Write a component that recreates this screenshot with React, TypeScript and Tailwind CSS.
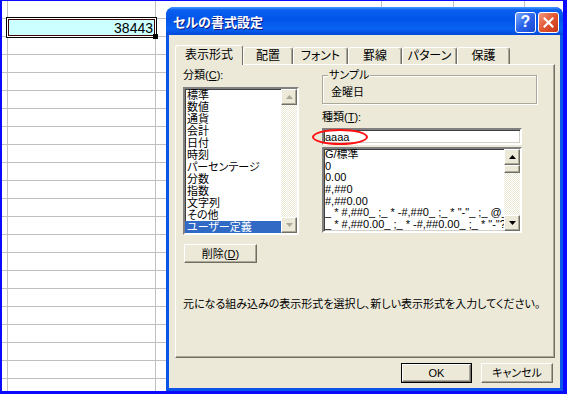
const ui = "font-['Liberation_Sans','Noto_Sans_CJK_JP',sans-serif] [font-feature-settings:'palt']";

const sheetCols = ["w-[6px]", "w-[148px]", "w-[226px]", "w-[72px]", "w-[71px]", "w-[200px]"];

const raised =
  "border border-t-white border-l-white border-r-[#716f64] border-b-[#716f64] shadow-[inset_-1px_-1px_0_#aca899]";
const sunken =
  "border-2 border-t-[#808080] border-l-[#808080] border-r-white border-b-white shadow-[inset_1px_1px_0_#404040,inset_-1px_-1px_0_#d4d0c8]";
const track = "bg-[repeating-conic-gradient(#ece9d8_0%_25%,#ffffff_0%_50%)] [background-size:2px_2px]";

function ActiveCell() {
  return (
    <div className="absolute -left-[2px] -top-[2px] z-10 h-[21px] w-[151px] border border-black bg-white p-px">
      <div className="flex h-full items-center justify-end border border-[#400000] bg-[#ccffff] pr-px font-['Liberation_Sans',sans-serif] text-[14px] leading-none text-black">
        38443
      </div>
      <div className="absolute left-[146px] top-[16px] size-[5px] bg-black" />
    </div>
  );
}

function Sheet() {
  return (
    <div className="flex flex-col">
      {Array.from({ length: 22 }).map((_, r) => (
        <div key={r} className="flex h-[18px] shrink-0">
          {sheetCols.map((w, c) => (
            <div key={c} className={`relative h-full shrink-0 border-r border-b border-[#c0c0c0] ${w}`}>
              {r === 1 && c === 1 && <ActiveCell />}
            </div>
          ))}
        </div>
      ))}
    </div>
  );
}

function Arrow({ up, dim }: { up?: boolean; dim?: boolean }) {
  return (
    <svg width="7" height="4" viewBox="0 0 7 4">
      <polygon points={up ? "0,4 3.5,0 7,4" : "0,0 3.5,4 7,0"} fill={dim ? "#aca899" : "#000"} />
    </svg>
  );
}

function ScrollButton({ up, dim }: { up?: boolean; dim?: boolean }) {
  return (
    <div className={`flex h-[16px] shrink-0 items-center justify-center bg-[#ece9d8] ${raised}`}>
      <Arrow up={up} dim={dim} />
    </div>
  );
}

function ScrollBar({ dim, thumb }: { dim?: boolean; thumb?: boolean }) {
  return (
    <div className="flex h-full w-[16px] shrink-0 flex-col">
      <ScrollButton up dim={dim} />
      {thumb && <div className={`h-[8px] shrink-0 bg-[#ece9d8] ${raised}`} />}
      <div className={`flex-1 ${track}`} />
      <ScrollButton dim={dim} />
    </div>
  );
}

const categories = ["標準", "数値", "通貨", "会計", "日付", "時刻", "パーセンテージ", "分数", "指数", "文字列", "その他", "ユーザー定義"];

const formats = [
  "G/標準",
  "0",
  "0.00",
  "#,##0",
  "#,##0.00",
  '_ * #,##0_ ;_ * -#,##0_ ;_ * "-"_ ;_ @_ ',
  '_ * #,##0.00_ ;_ * -#,##0.00_ ;_ * "-"??_ ;_ @_ ',
  '_ ¥* #,##0_ ;_ ¥* -#,##0_ ;_ ¥* "-"_ ;_ @_ ',
];

const tabs = [
  { label: "配置", w: "w-[50px]" },
  { label: "フォント", w: "w-[55px]" },
  { label: "罫線", w: "w-[54px]" },
  { label: "パターン", w: "w-[55px]" },
  { label: "保護", w: "w-[53px]" },
];

function Dialog() {
  return (
    <div className={`absolute left-[164px] top-[6px] flex h-[384px] w-[397px] flex-col rounded-t-[8px] bg-[#0b56e8] px-[3px] pb-[3px] ${ui}`}>
      <div className="-mx-[3px] flex h-[28px] shrink-0 items-center rounded-t-[8px] bg-[linear-gradient(180deg,#4a9bff_0px,#0a5ff0_3px,#0055e8_12px,#0a62f2_22px,#0048d8_28px)] pl-[7px] pr-[4px] pt-[2px]">
        <span className="flex-1 text-[13px] font-bold leading-none text-white [text-shadow:1px_1px_0_#0a1883]">
          セルの書式設定
        </span>
        <div className="mr-[2px] flex size-[21px] items-center justify-center rounded-[3px] border border-white bg-[linear-gradient(135deg,#7aa8fb,#2a64ea_50%,#1a48d2)] font-['Liberation_Sans',sans-serif] text-[16px] font-bold leading-none text-white">
          ?
        </div>
        <div className="flex size-[21px] items-center justify-center rounded-[3px] border border-white bg-[linear-gradient(135deg,#f29a80,#e1552f_50%,#c2361a)]">
          <svg width="11" height="11" viewBox="0 0 11 11">
            <path d="M1.5 1.5 L9.5 9.5 M9.5 1.5 L1.5 9.5" stroke="#fff" strokeWidth="2.2" strokeLinecap="square" />
          </svg>
        </div>
      </div>

      <div className="flex flex-1 flex-col bg-[#ece9d8] pl-[6px] pr-[5px] pt-[10px] text-[11px] leading-[12px] text-black">
        <div className="flex h-[19px] items-end">
          <div className="relative z-10 -mb-px flex h-[20px] w-[68px] items-center justify-center rounded-t-[3px] border-l border-t border-r border-l-white border-t-white border-r-[#716f64] bg-[#ece9d8] pb-[2px] text-[12px]">
            表示形式
          </div>
          {tabs.map((t) => (
            <div
              key={t.label}
              className={`flex h-[17px] items-center justify-center rounded-t-[3px] border-l border-t border-r border-l-white border-t-white border-r-[#716f64] bg-[#ece9d8] shadow-[inset_-1px_0_0_#aca899] text-[12px] ${t.w}`}
            >
              {t.label}
            </div>
          ))}
        </div>

        <div className="flex h-[294px] w-[380px] flex-col border border-t-white border-l-white border-r-[#716f64] border-b-[#716f64] shadow-[inset_-1px_-1px_0_#aca899]">
          <div className="flex">
            <div className="ml-[7px] mt-[4px] flex w-[116px] flex-col">
              <div className="h-[12px]">
                分類(<u>C</u>):
              </div>
              <div className={`mt-[6px] flex h-[148px] bg-white ${sunken}`}>
                <div className="flex-1 overflow-hidden">
                  {categories.map((c, i) => (
                    <div
                      key={c}
                      className={`h-[12px] whitespace-nowrap pl-[2px] ${i === categories.length - 1 ? "bg-[#316ac5] text-white" : ""}`}
                    >
                      {c}
                    </div>
                  ))}
                </div>
                <ScrollBar dim />
              </div>
              <div className={`ml-px mt-[9px] flex h-[19px] w-[73px] items-center justify-center bg-[#ece9d8] ${raised}`}>
                削除(<u>D</u>)
              </div>
            </div>

            <div className="ml-[23px] flex flex-col">
              <div className="relative mt-[10px] h-[29px] w-[215px] border border-[#aca899] pl-[8px] pt-[10px] shadow-[inset_1px_1px_0_#fff,1px_1px_0_#fff]">
                <span className="absolute -top-[7px] left-[5px] bg-[#ece9d8] px-px">サンプル</span>
                金曜日
              </div>
              <div className="mt-[7px] h-[12px]">
                種類(<u>T</u>):
              </div>
              <div className="relative mt-[5px] h-[17px] w-[200px]">
                <div className={`flex h-full items-center bg-white pl-[1px] ${sunken}`}>aaaa</div>
                <div className="absolute -left-[10px] top-[1px] h-[16px] w-[56px] rounded-[50%] border-2 border-[#ff1010]" />
              </div>
              <div className={`mt-[2px] flex h-[86px] w-[200px] bg-white ${sunken}`}>
                <div className="flex-1 overflow-hidden">
                  {formats.map((f, i) => (
                    <div key={i} className="h-[11.7px] whitespace-pre pl-px leading-[11.7px]">
                      {f}
                    </div>
                  ))}
                </div>
                <ScrollBar thumb />
              </div>
            </div>
          </div>
          <div className="ml-[7px] mt-[35px] whitespace-nowrap">
            元になる組み込みの表示形式を選択し、新しい表示形式を入力してください。
          </div>
        </div>

        <div className="mt-[5px] flex justify-end gap-[9px] pr-[2px]">
          <div className="h-[20px] w-[71px] border border-black">
            <div className={`flex h-full items-center justify-center bg-[#ece9d8] ${raised}`}>OK</div>
          </div>
          <div className={`flex h-[20px] w-[72px] items-center justify-center bg-[#ece9d8] ${raised}`}>キャンセル</div>
        </div>
      </div>
    </div>
  );
}

export default function App() {
  return (
    <div className="relative h-[394px] w-[567px] overflow-hidden border-b-[3px] border-l-2 border-r-4 border-t border-[#0a0aff] bg-white">
      <Sheet />
      <Dialog />
    </div>
  );
}
